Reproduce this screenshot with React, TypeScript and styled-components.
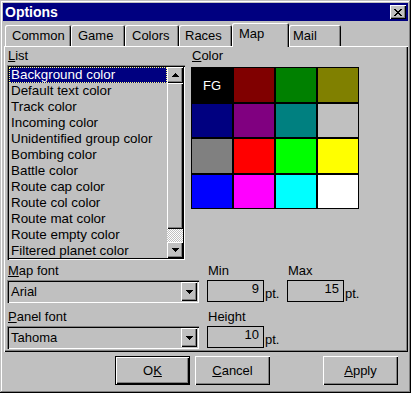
import React from "react";
import styled, { createGlobalStyle } from "styled-components";

const GlobalStyle = createGlobalStyle`
  html, body { margin: 0; padding: 0; background: #c0c0c0; }
  body { font-family: "Liberation Sans", Arial, sans-serif; font-size: 13px; color: #000; }
  * { box-sizing: border-box; }
`;

const tabs = [
  { label: "Common", w: 66, pad: 7 },
  { label: "Game", w: 54, pad: 7 },
  { label: "Colors", w: 54, pad: 7 },
  { label: "Races", w: 53, pad: 6 },
  { label: "Map", w: 57, pad: 7, active: true },
  { label: "Mail", w: 52, pad: 4 },
];

const items = [
  "Background color",
  "Default text color",
  "Track color",
  "Incoming color",
  "Unidentified group color",
  "Bombing color",
  "Battle color",
  "Route cap color",
  "Route col color",
  "Route mat color",
  "Route empty color",
  "Filtered planet color",
];

const palette = [
  "#000000", "#800000", "#008000", "#808000",
  "#000080", "#800080", "#008080", "#c0c0c0",
  "#808080", "#ff0000", "#00ff00", "#ffff00",
  "#0000ff", "#ff00ff", "#00ffff", "#ffffff",
];

const X_ROWS = ["11000011", "01100110", "00111100", "00011000", "00111100", "01100110", "11000011"];

const App = () => {
  return (
    <>
      <GlobalStyle />
      <Window>
        <TitleBar>
          <span>Options</span>
          <CloseButton>
            <Glyph width="8" height="7" viewBox="0 0 8 7">
              {X_ROWS.map((row, y) =>
                row.split("").map((c, x) =>
                  c === "1" ? <rect key={`${x}-${y}`} x={x} y={y} width="1" height="1" fill="#000" /> : null
                )
              )}
            </Glyph>
          </CloseButton>
        </TitleBar>

        <TabRow>
          {tabs.map(t => (
            <Tab key={t.label} $w={t.w} $pad={t.pad} $active={t.active}>{t.label}</Tab>
          ))}
        </TabRow>

        <Panel>
          <TopSection>
            <ListCol>
              <Label><u>L</u>ist</Label>
              <ListBox>
                <Items>
                  {items.map((it, i) => (
                    <Item key={it} $selected={i === 0}>{it}</Item>
                  ))}
                </Items>
                <ScrollBar>
                  <ScrollButton><Arrow up /></ScrollButton>
                  <Thumb />
                  <Track />
                  <ScrollButton><Arrow /></ScrollButton>
                </ScrollBar>
              </ListBox>
            </ListCol>
            <ColorCol>
              <Label><u>C</u>olor</Label>
              <ColorGrid>
                {palette.map((c, i) => (
                  <Swatch key={i} $color={c}>{i === 0 ? "FG" : null}</Swatch>
                ))}
              </ColorGrid>
            </ColorCol>
          </TopSection>

          <LowerGrid>
            <Cell>
              <Label><u>M</u>ap font</Label>
              <Combo>
                <span>Arial</span>
                <DropButton><Arrow /></DropButton>
              </Combo>
            </Cell>
            <Cell>
              <Label>Min</Label>
              <FieldRow>
                <Field>9</Field>
                <Unit>pt.</Unit>
              </FieldRow>
            </Cell>
            <Cell>
              <Label>Max</Label>
              <FieldRow>
                <Field>15</Field>
                <Unit>pt.</Unit>
              </FieldRow>
            </Cell>
            <Cell>
              <Label><u>P</u>anel font</Label>
              <Combo>
                <span>Tahoma</span>
                <DropButton><Arrow /></DropButton>
              </Combo>
            </Cell>
            <Cell>
              <Label>Height</Label>
              <FieldRow>
                <Field>10</Field>
                <Unit>pt.</Unit>
              </FieldRow>
            </Cell>
          </LowerGrid>
        </Panel>

        <ButtonRow>
          <Button $default>O<u>K</u></Button>
          <Button><u>C</u>ancel</Button>
          <Spacer />
          <Button><u>A</u>pply</Button>
        </ButtonRow>
      </Window>
    </>
  );
};

export default App;

const Arrow = ({ up }: { up?: boolean }) => (
  <Glyph width="7" height="4" viewBox="0 0 7 4">
    <path
      d={up ? "M3 0h1v1h1v1h1v1h1v1H0V3h1V2h1V1h1z" : "M0 0h7v1H6v1H5v1H4v1H3V3H2V2H1V1H0z"}
      fill="#000"
    />
  </Glyph>
);

const raised = `
  box-shadow: inset 1px 1px #fff, inset -1px -1px #000, inset -2px -2px #808080;
`;

const Window = styled.div`
  width: 411px;
  height: 393px;
  background: #c0c0c0;
  padding: 3px;
  box-shadow: inset -1px -1px #000, inset 1px 1px #c0c0c0, inset -2px -2px #808080, inset 2px 2px #fff;
  display: flex;
  flex-direction: column;
`;

const TitleBar = styled.div`
  height: 18px;
  background: #000080;
  color: #fff;
  font-weight: bold;
  font-size: 14px;
  display: flex;
  align-items: center;
  justify-content: space-between;
  padding: 0 2px;
`;

const CloseButton = styled.div`
  width: 16px;
  height: 14px;
  background: #c0c0c0;
  display: flex;
  align-items: center;
  justify-content: center;
  ${raised}
`;

const Glyph = styled.svg`
  display: block;
`;

const TabRow = styled.div`
  display: flex;
  align-items: flex-end;
  height: 23px;
  margin-top: 2px;
  padding-left: 2px;
  position: relative;
  z-index: 1;
`;

const Tab = styled.div<{ $w: number; $pad: number; $active?: boolean }>`
  width: ${p => p.$w}px;
  height: ${p => (p.$active ? 24 : 21)}px;
  margin-bottom: ${p => (p.$active ? -1 : 0)}px;
  padding: 3px 0 0 ${p => p.$pad}px;
  line-height: 16px;
  background: #c0c0c0;
  border-radius: 2px 2px 0 0;
  box-shadow: inset 1px 1px #fff, inset -1px 0 #000, inset -2px 0 #808080;
`;

const Panel = styled.div`
  margin-left: 1px;
  width: 404px;
  height: 306px;
  padding: 1px 3px 0 3px;
  box-shadow: inset 1px 1px #fff, inset -1px -1px #000, inset -2px -2px #808080;
`;

const TopSection = styled.div`
  display: flex;
  gap: 6px;
`;

const ListCol = styled.div`
  width: 178px;
`;

const ColorCol = styled.div`
  display: flex;
  flex-direction: column;
`;

const Label = styled.div`
  height: 18px;
  padding: 1px 0 0 1px;
  line-height: 16px;
  white-space: nowrap;
`;

const ListBox = styled.div`
  height: 195px;
  padding: 2px;
  display: flex;
  box-shadow: inset 1px 1px #808080, inset 2px 2px #000, inset -1px -1px #fff, inset -2px -2px #000;
`;

const Items = styled.div`
  flex: 1;
  overflow: hidden;
`;

const Item = styled.div<{ $selected?: boolean }>`
  height: 16px;
  line-height: 16px;
  padding-left: 2px;
  font-size: 13.4px;
  white-space: nowrap;
  background: ${p => (p.$selected ? "#000080" : "transparent")};
  color: ${p => (p.$selected ? "#fff" : "#000")};
  outline: ${p => (p.$selected ? "1px dotted #ffff80" : "none")};
  outline-offset: -1px;
`;

const ScrollBar = styled.div`
  width: 16px;
  display: flex;
  flex-direction: column;
`;

const ScrollButton = styled.div`
  height: 16px;
  flex-shrink: 0;
  display: flex;
  align-items: center;
  justify-content: center;
  background: #c0c0c0;
  ${raised}
`;

const Thumb = styled.div`
  height: 146px;
  background: #c0c0c0;
  ${raised}
`;

const Track = styled.div`
  flex: 1;
  background-image: conic-gradient(#fff 25%, #c0c0c0 0 50%, #fff 0 75%, #c0c0c0 0);
  background-size: 2px 2px;
`;

const ColorGrid = styled.div`
  margin-top: 2px;
  display: grid;
  grid-template-columns: repeat(4, 42px);
  grid-template-rows: 36px 35px 36px 35px;
`;

const Swatch = styled.div<{ $color: string }>`
  background: ${p => p.$color};
  border: 1px solid #000;
  color: #fff;
  display: flex;
  align-items: center;
  justify-content: center;
`;

const LowerGrid = styled.div`
  margin-top: 2px;
  display: grid;
  grid-template-columns: 200px 80px 80px;
  row-gap: 5px;
`;

const Cell = styled.div`
  display: flex;
  flex-direction: column;
`;

const Combo = styled.div`
  width: 192px;
  height: 23px;
  padding: 2px 2px 2px 4px;
  display: flex;
  align-items: center;
  justify-content: space-between;
  box-shadow: inset 1px 1px #808080, inset 2px 2px #000, inset -1px -1px #fff, inset -2px -2px #c0c0c0;
`;

const DropButton = styled.div`
  width: 16px;
  height: 19px;
  display: flex;
  align-items: center;
  justify-content: center;
  background: #c0c0c0;
  ${raised}
`;

const FieldRow = styled.div`
  display: flex;
  align-items: flex-end;
`;

const Field = styled.div`
  width: 57px;
  height: 22px;
  border: 1px solid #000;
  padding: 0 4px 0 0;
  line-height: 15px;
  text-align: right;
`;

const Unit = styled.span`
  margin-left: 1px;
  line-height: 16px;
`;

const ButtonRow = styled.div`
  display: flex;
  margin-top: 4px;
  padding-left: 112px;
  padding-right: 10px;
  gap: 5px;
`;

const Spacer = styled.div`
  flex: 1;
`;

const Button = styled.div<{ $default?: boolean }>`
  width: 75px;
  height: 29px;
  display: flex;
  align-items: center;
  justify-content: center;
  background: #c0c0c0;
  border: ${p => (p.$default ? "1px solid #000" : "none")};
  ${raised}
`;
